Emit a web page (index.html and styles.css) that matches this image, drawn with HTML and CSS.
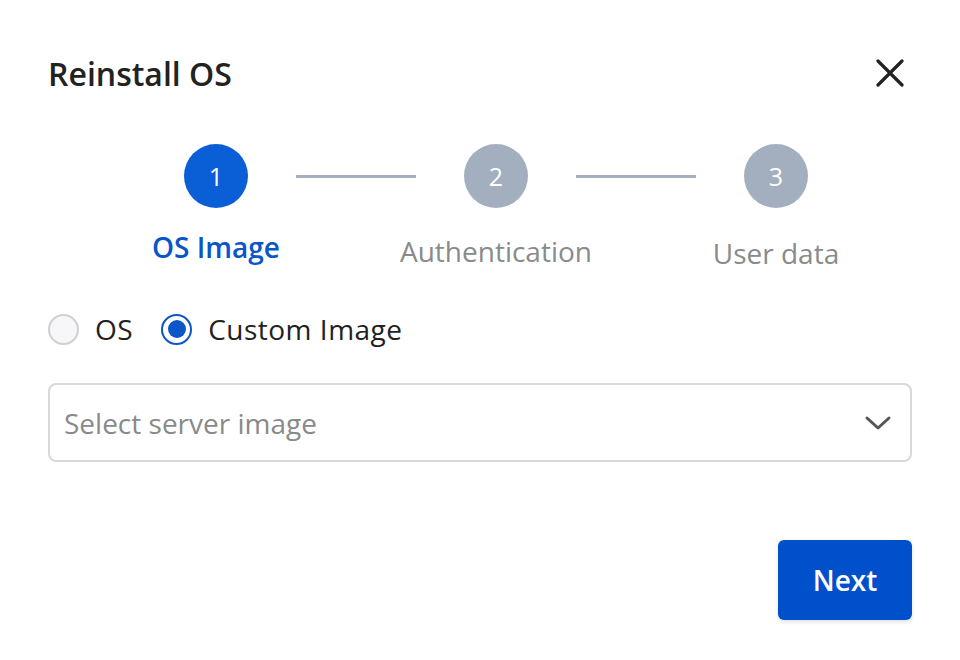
FILE: index.html
```html
<!DOCTYPE html>
<html>
<head>
<meta charset="utf-8">
<link rel="stylesheet" href="styles.css">
</head>
<body>
<div class="dialog">
  <div class="header">
    <h1 class="title">Reinstall OS</h1>
    <button class="close" aria-label="Close">
      <svg width="28" height="28" viewBox="0 0 28 28"><path d="M2 2 L26 26 M26 2 L2 26" stroke="#222" stroke-width="3.2" stroke-linecap="round" fill="none"/></svg>
    </button>
  </div>
  <div class="stepper">
    <div class="step active">
      <div class="circle">1</div>
      <div class="label">OS Image</div>
    </div>
    <div class="line"></div>
    <div class="step">
      <div class="circle">2</div>
      <div class="label">Authentication</div>
    </div>
    <div class="line"></div>
    <div class="step last">
      <div class="circle">3</div>
      <div class="label">User data</div>
    </div>
  </div>
  <div class="radios">
    <label class="radio"><span class="dot"></span><span>OS</span></label>
    <label class="radio checked"><span class="dot"></span><span>Custom Image</span></label>
  </div>
  <div class="select">
    <span class="placeholder">Select server image</span>
    <svg width="28" height="16" viewBox="0 0 28 16"><path d="M3 3 L14 13 L25 3" stroke="#555" stroke-width="3" fill="none" stroke-linecap="round" stroke-linejoin="round"/></svg>
  </div>
  <div class="footer">
    <button class="next">Next</button>
  </div>
</div>
</body>
</html>
```
FILE: styles.css
```css
* { box-sizing: border-box; }
html, body { margin: 0; padding: 0; background: #fff; }
body { font-family: "Open Sans", "Noto Sans", sans-serif; color: #222; }
.dialog { width: 960px; height: 660px; padding: 48px 48px 0 48px; }
.header { display: flex; justify-content: space-between; align-items: center; height: 50px; }
.title { margin: 0; font-size: 32px; font-weight: 600; color: #222; }
.close { border: 0; background: none; padding: 0; margin-right: 8px; width: 28px; height: 28px; display: flex; }
.stepper { display: flex; align-items: flex-start; justify-content: center; margin-top: 46px; padding-left: 32px; }
.step { width: 200px; display: flex; flex-direction: column; align-items: center; }
.circle { width: 64px; height: 64px; border-radius: 50%; background: #a3afbe; color: #fff; font-size: 25px; font-weight: 500; display: flex; align-items: center; justify-content: center; }
.step.active .circle { background: #0a5fd7; }
.label { margin-top: 23px; font-size: 28px; color: #8a8a8a; line-height: 40px; white-space: nowrap; }
.step.last .label { margin-top: 25px; }
.step.active .label { color: #0a55c8; font-weight: 600; margin-top: 19px; }
.line { width: 120px; height: 3px; background: #a3afbe; margin: 31px -20px 0; }
.radios { display: flex; gap: 28px; margin-top: 36px; align-items: center; }
.radio { display: flex; align-items: center; gap: 16px; font-size: 28px; line-height: 40px; color: #222; letter-spacing: 0.5px; }
.dot { width: 31px; height: 31px; border-radius: 50%; border: 2px solid #cfcfd4; background: #f7f7fa; display: inline-block; position: relative; }
.radio.checked .dot { border-color: #0a55c8; background: #fff; }
.radio.checked .dot::after { content: ""; position: absolute; left: 4.5px; top: 4.5px; width: 18px; height: 18px; border-radius: 50%; background: #0a55c8; }
.select { margin-top: 34px; height: 79px; border: 2px solid #d9d9d9; border-radius: 8px; display: flex; align-items: center; justify-content: space-between; padding: 0 18px 0 14px; }
.placeholder { font-size: 28px; color: #8a8a8a; }
.footer { display: flex; justify-content: flex-end; margin-top: 78px; }
.next { width: 134px; height: 80px; border: 0; border-radius: 6px; background: #0050cc; color: #fff; font-family: "Open Sans", "Noto Sans", sans-serif; font-size: 28px; font-weight: 600; box-shadow: 0 2px 4px rgba(0,0,0,0.12); }
```
